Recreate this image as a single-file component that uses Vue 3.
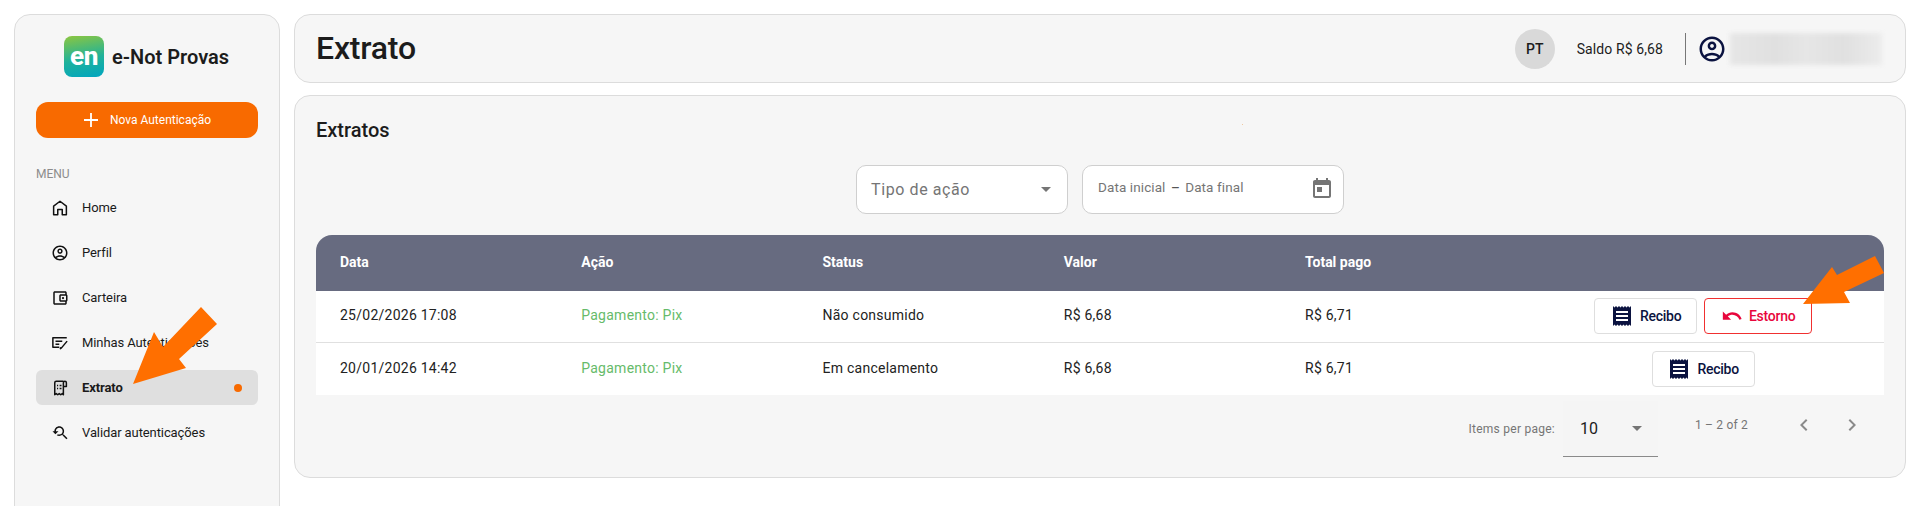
<script setup>
/* material icon paths, 24x24 */
const receiptIcon = 'M18 17H6v-2h12v2zm0-4H6v-2h12v2zm0-4H6V7h12v2zM3 22l1.5-1.5L6 22l1.5-1.5L9 22l1.5-1.5L12 22l1.5-1.5L15 22l1.5-1.5L18 22l1.5-1.5L21 22V2l-1.5 1.5L18 2l-1.5 1.5L15 2l-1.5 1.5L12 2l-1.5 1.5L9 2 7.5 3.5 6 2 4.5 3.5 3 2v20z'
const undoIcon = 'M12.5 8c-2.65 0-5.05.99-6.9 2.6L2 7v9h9l-3.62-3.62c1.39-1.16 3.16-1.88 5.12-1.88 3.54 0 6.55 2.31 7.6 5.5l2.37-.78C21.08 11.03 17.15 8 12.5 8z'
const userIcon = 'M12 2C6.48 2 2 6.48 2 12s4.48 10 10 10 10-4.48 10-10S17.52 2 12 2zM7.35 18.5C8.66 17.56 10.26 17 12 17s3.34.56 4.65 1.5C15.34 19.44 13.74 20 12 20s-3.34-.56-4.65-1.5zm10.79-1.38C16.45 15.8 14.32 15 12 15s-4.45.8-6.14 2.12C4.7 15.73 4 13.95 4 12c0-4.42 3.58-8 8-8s8 3.58 8 8c0 1.95-.7 3.73-1.86 5.12zM12 6c-1.93 0-3.5 1.57-3.5 3.5S10.07 13 12 13s3.5-1.57 3.5-3.5S13.93 6 12 6zm0 5c-.83 0-1.5-.67-1.5-1.5S11.17 8 12 8s1.5.67 1.5 1.5S12.83 11 12 11z'

const menu = [
  { label: 'Home', line: 'M3.500 21V9.500L12 3l8.500 6.500V21H15v-7H9v7z' },
  { label: 'Perfil', d: userIcon },
  { label: 'Carteira', d: 'M21 7.28V5c0-1.1-.9-2-2-2H5c-1.11 0-2 .9-2 2v14c0 1.1.89 2 2 2h14c1.1 0 2-.9 2-2v-2.28c.59-.35 1-.98 1-1.72V9c0-.74-.41-1.37-1-1.72zM20 9v6h-7V9h7zM5 19V5h14v2h-6c-1.1 0-2 .9-2 2v6c0 1.1.9 2 2 2h6v2H5zM16 10.5a1.5 1.5 0 1 0 0 3 1.5 1.5 0 0 0 0-3z' },
  { label: 'Minhas Autenticações', line: 'M21 5H2.500v12.500H11M6 9.500h9M6 13.500h5M21.500 9.500L14 18.500l-1.500 1 .5-1.800' },
  { label: 'Extrato', active: true, line: 'M16.500 3H7a2 2 0 0 0-2 2v16l2-1.500 2 1.500 2-1.500 2 1.500 2-1.500 1.500 1.500V5a2 2 0 0 1 4 0v5h-4M8 8.500h1.500M8 12.500h1.500M11.500 8.500H14M11.500 12.500H14' },
  { label: 'Validar autenticações', d: 'M17.01 14h-.8l-.27-.27c.98-1.14 1.57-2.61 1.57-4.23 0-3.59-2.91-6.5-6.5-6.5s-6.5 3-6.5 6.5H2l3.84 4 4.16-4H6.51C6.51 7 8.53 5 11.01 5s4.5 2.01 4.5 4.5c0 2.48-2.02 4.5-4.5 4.5-.65 0-1.26-.14-1.82-.38L7.71 15.1c.97.57 2.09.9 3.3.9 1.61 0 3.08-.59 4.22-1.57l.27.27v.79l5.01 5L22 19.01 17.01 14z' }
]

const rows = [
  { date: '25/02/2026 17:08', action: 'Pagamento: Pix', status: 'Não consumido', value: 'R$ 6,68', total: 'R$ 6,71', refund: true },
  { date: '20/01/2026 14:42', action: 'Pagamento: Pix', status: 'Em cancelamento', value: 'R$ 6,68', total: 'R$ 6,71', refund: false }
]
</script>

<template>
  <div class="page">
    <aside class="sidebar">
      <div class="brand">
        <div class="logo"><span>en</span></div>
        <span class="brand-name">e-Not Provas</span>
      </div>
      <button class="new-btn">
        <svg width="24" height="24" viewBox="0 0 24 24"><path d="M19 12.900h-6.100V19h-1.800v-6.100H5v-1.800h6.100V5h1.800v6.100H19z" fill="#fff" /></svg>
        <span>Nova Autenticação</span>
      </button>
      <div class="menu-title">MENU</div>
      <nav class="menu">
        <a v-for="item in menu" :key="item.label" class="menu-item" :class="{ active: item.active }">
          <svg width="18" height="18" viewBox="0 0 24 24">
            <path v-if="item.d" :d="item.d" fill="#111" />
            <path v-else :d="item.line" fill="none" stroke="#111" stroke-width="2" stroke-linejoin="round" />
          </svg>
          <span>{{ item.label }}</span>
          <i v-if="item.active" class="dot"></i>
        </a>
      </nav>
    </aside>

    <main class="content">
      <header class="topbar">
        <h1>Extrato</h1>
        <div class="avatar">PT</div>
        <span class="balance">Saldo R$ 6,68</span>
        <div class="divider"></div>
        <svg class="user-icon" width="30" height="30" viewBox="0 0 24 24"><path :d="userIcon" fill="#0b1340" /></svg>
        <div class="blurred"></div>
      </header>

      <section class="panel">
        <h2>Extratos</h2>
        <div class="filters">
          <div class="field select-field">
            <span>Tipo de ação</span>
            <i class="caret"></i>
          </div>
          <div class="field date-field">
            <span class="date-text">Data inicial <b>–</b> Data final</span>
            <svg width="24" height="24" viewBox="0 0 24 24"><path d="M19 4h-1V2h-2v2H8V2H6v2H5c-1.110 0-2 .9-2 2v14c0 1.100.89 2 2 2h14c1.100 0 2-.9 2-2V6c0-1.100-.9-2-2-2zm0 16H5V9h14v11zM7 11h5v5H7z" fill="#757575" /></svg>
          </div>
        </div>

        <table class="grid">
          <thead>
            <tr>
              <th>Data</th>
              <th>Ação</th>
              <th>Status</th>
              <th>Valor</th>
              <th>Total pago</th>
              <th></th>
            </tr>
          </thead>
          <tbody>
            <tr v-for="row in rows" :key="row.date">
              <td>{{ row.date }}</td>
              <td class="green">{{ row.action }}</td>
              <td>{{ row.status }}</td>
              <td>{{ row.value }}</td>
              <td>{{ row.total }}</td>
              <td class="actions">
                <button class="btn">
                  <svg width="24" height="24" viewBox="0 0 24 24"><path :d="receiptIcon" fill="#0b1340" /></svg>
                  Recibo
                </button>
                <button v-if="row.refund" class="btn danger">
                  <svg width="22" height="22" viewBox="0 0 24 24"><path :d="undoIcon" fill="#e8063c" /></svg>
                  Estorno
                </button>
              </td>
            </tr>
          </tbody>
        </table>

        <div class="paginator">
          <span class="per-page">Items per page:</span>
          <div class="page-select">
            <span>10</span>
            <i class="caret"></i>
          </div>
          <span class="range">1 – 2 of 2</span>
          <button class="nav-btn">
            <svg width="24" height="24" viewBox="0 0 24 24"><path d="M15.410 7.410L14 6l-6 6 6 6 1.410-1.410L10.830 12z" fill="#8a8a8a" /></svg>
          </button>
          <button class="nav-btn">
            <svg width="24" height="24" viewBox="0 0 24 24"><path d="M10 6L8.590 7.410 13.170 12l-4.580 4.590L10 18l6-6z" fill="#8a8a8a" /></svg>
          </button>
        </div>
      </section>
    </main>

    <!-- orange arrows drawn on top of the screenshot -->
    <svg class="marks" width="1920" height="506" viewBox="0 0 1920 506">
      <polygon points="133,384 154,332 163,347 201,307 217,324 179,359 186,368" fill="#ff6f00" />
      <polygon points="1803,304 1832,267 1837,275 1875,256 1884,273 1844,292 1850,303" fill="#ff6f00" />
      <rect x="1242" y="124" width="1" height="1" fill="#f0c8a0" />
    </svg>
  </div>
</template>

<style>
html, body {
  margin: 0;
  background: #fff;
  overflow: hidden;
}
</style>

<style scoped>
.page {
  position: relative;
  box-sizing: border-box;
  height: 506px;
  overflow: hidden;
  display: flex;
  gap: 14px;
  padding: 14px 14px 0;
  font-family: Roboto, "Liberation Sans", sans-serif;
  color: #1c1c1c;
}

.sidebar {
  flex: 0 0 266px;
  box-sizing: border-box;
  height: 560px;
  padding: 21px 21px 0;
  background: #f6f6f6;
  border: 1px solid #dcdcdc;
  border-radius: 16px;
}

.brand {
  display: flex;
  align-items: center;
  justify-content: center;
  gap: 8px;
  height: 41px;
  padding-right: 1px;
}

.logo {
  width: 40px;
  height: 41px;
  border-radius: 8px;
  background: linear-gradient(170deg, #8dc63f 0%, #1fb29a 55%, #00a5c0 100%);
  display: flex;
  align-items: center;
  justify-content: center;
  color: #fff;
  font-weight: 800;
  font-size: 26px;
  letter-spacing: -.5px;
  line-height: 1;
}

.logo span {
  position: relative;
  top: -1px;
}

.brand-name {
  font-size: 20px;
  font-weight: 600;
}

.new-btn {
  width: 222px;
  height: 36px;
  margin-top: 25px;
  border: 0;
  border-radius: 12px;
  background: #f86a00;
  color: #fff;
  font: 400 12px Roboto, sans-serif;
  display: flex;
  align-items: center;
  justify-content: center;
  gap: 7px;
  padding: 0 4px 0 0;
}

.menu-title {
  margin-top: 29px;
  font-size: 12px;
  line-height: 14px;
  color: #8c8c8c;
}

.menu {
  margin-top: 9px;
  display: flex;
  flex-direction: column;
  gap: 10px;
}

.menu-item {
  height: 35px;
  display: flex;
  align-items: center;
  gap: 13px;
  padding: 0 16px 0 15px;
  border-radius: 6px;
  font-size: 13px;
  letter-spacing: -.1px;
  color: #1a1a1a;
}

.menu-item.active {
  background: #dfdfdf;
  font-weight: 700;
}

.dot {
  width: 8px;
  height: 8px;
  margin-left: auto;
  border-radius: 50%;
  background: #f86a00;
}

.content {
  flex: 1;
  display: flex;
  flex-direction: column;
  gap: 12px;
  min-width: 0;
}

.topbar {
  box-sizing: border-box;
  height: 69px;
  display: flex;
  align-items: center;
  padding: 0 23px 0 21px;
  background: #f6f6f6;
  border: 1px solid #dcdcdc;
  border-radius: 16px;
}

.topbar h1 {
  margin: 0 auto 2px 0;
  font-size: 32px;
  font-weight: 500;
  letter-spacing: -.2px;
}

.avatar {
  width: 40px;
  height: 40px;
  border-radius: 50%;
  background: #d9d9d9;
  display: flex;
  align-items: center;
  justify-content: center;
  font-size: 14px;
  font-weight: 500;
}

.balance {
  margin-left: 22px;
  font-size: 14px;
  font-weight: 400;
  letter-spacing: .1px;
}

.divider {
  width: 1px;
  height: 32px;
  margin: 0 11px 0 22px;
  background: #777;
}

.user-icon {
  flex: none;
}

.blurred {
  width: 152px;
  height: 32px;
  margin-left: 3px;
  background: linear-gradient(90deg, #e6e6e6, #e0e0e0 30%, #e6e6e6 50%, #e0e0e0 75%, #ececec);
  filter: blur(2px);
}

.panel {
  box-sizing: border-box;
  height: 383px;
  padding: 0 21px;
  background: #f6f6f6;
  border: 1px solid #dcdcdc;
  border-radius: 16px;
}

.panel h2 {
  margin: 24px 0 0;
  font-size: 20px;
  line-height: 21px;
  font-weight: 500;
}

.filters {
  display: flex;
  justify-content: center;
  gap: 14px;
  margin-top: 24px;
}

.field {
  box-sizing: border-box;
  height: 49px;
  display: flex;
  align-items: center;
  background: #fff;
  border: 1px solid #cfcfcf;
  border-radius: 10px;
  color: #757575;
}

.select-field {
  width: 212px;
  padding: 0 16px 0 14px;
  font-size: 16px;
  letter-spacing: .6px;
  justify-content: space-between;
}

.date-field {
  width: 262px;
  padding: 0 9px 5px 15px;
  font-size: 13.5px;
  letter-spacing: .1px;
  justify-content: space-between;
}

.date-field svg {
  position: relative;
  top: 1px;
}

.date-text b {
  font-weight: 500;
  color: #555;
  margin: 0 2px;
}

.caret {
  width: 0;
  height: 0;
  border-left: 5px solid transparent;
  border-right: 5px solid transparent;
  border-top: 5px solid #757575;
}

.grid {
  width: 100%;
  margin-top: 21px;
  border-collapse: separate;
  border-spacing: 0;
  table-layout: fixed;
  font-size: 14px;
}

.grid th {
  width: 241.25px;
  height: 56px;
  box-sizing: border-box;
  padding: 0 24px 3px;
  background: #676b80;
  color: #fff;
  font-size: 14px;
  font-weight: 700;
  text-align: left;
}

.grid th:last-child {
  width: auto;
  border-top-right-radius: 16px;
}

.grid th:first-child {
  border-top-left-radius: 16px;
}

.grid td {
  box-sizing: border-box;
  height: 52px;
  padding: 0 24px 3px;
  background: #fff;
  border-bottom: 1px solid #e0e0e0;
  letter-spacing: .25px;
  color: #222;
}

.grid tbody tr:last-child td {
  border-bottom: 0;
}

.grid td.green {
  color: #66bb6a;
}

.grid td.actions {
  padding: 0;
  text-align: center;
}

.grid tbody tr:first-child td.actions {
  padding-bottom: 2px;
}

.btn {
  box-sizing: border-box;
  height: 36px;
  width: 103px;
  display: inline-flex;
  align-items: center;
  justify-content: center;
  gap: 6px;
  padding: 0;
  background: #fff;
  border: 1px solid #dedede;
  border-radius: 4px;
  color: #0b1340;
  font: 500 14px Roboto, sans-serif;
  letter-spacing: -.25px;
  vertical-align: middle;
}

.btn.danger {
  width: 108px;
  margin-left: 7px;
  border-color: #f03030;
  color: #e8063c;
}

.paginator {
  display: flex;
  align-items: center;
  justify-content: flex-end;
  height: 56px;
  margin-top: 6px;
  padding-right: 8px;
  font-size: 12px;
  color: #757575;
}

.per-page {
  margin-right: 8px;
  letter-spacing: .25px;
}

.page-select {
  box-sizing: border-box;
  width: 95px;
  height: 56px;
  display: flex;
  align-items: center;
  justify-content: space-between;
  padding: 0 16px 0 17px;
  background: #f5f5f5;
  border-bottom: 1px solid #8a8a8a;
  font-size: 16px;
  color: #1c1c1c;
}

.range {
  margin: 0 32px 8px 37px;
  letter-spacing: .2px;
}

.nav-btn {
  width: 48px;
  height: 48px;
  padding: 0;
  margin-bottom: 8px;
  border: 0;
  background: none;
  display: flex;
  align-items: center;
  justify-content: center;
}

.marks {
  position: absolute;
  left: 0;
  top: 0;
  pointer-events: none;
}
</style>
